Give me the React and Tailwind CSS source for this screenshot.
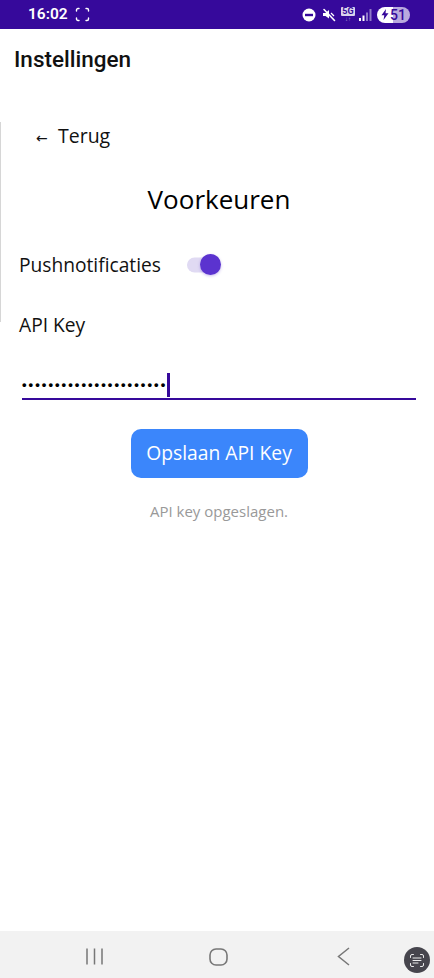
import { useState } from 'react';

function StatusBar() {
  return (
    <div className="h-[29px] shrink-0 bg-[#36099b] flex items-center justify-between pl-[28px] pr-[24px] text-white">
      <div className="flex items-center gap-[7px]">
        <span className="font-['Roboto',sans-serif] font-semibold text-[15.5px] leading-none">16:02</span>
        <svg width="15" height="15" viewBox="0 0 15 15" fill="none" stroke="#fff" strokeWidth="1.4" strokeLinecap="round">
          <path d="M1.5 4V3A1.5 1.5 0 0 1 3 1.500h1M11 1.500h1A1.500 1.500 0 0 1 13.500 3v1M13.500 11v1a1.500 1.500 0 0 1-1.500 1.500h-1M4 13.500H3A1.500 1.500 0 0 1 1.500 12v-1" />
        </svg>
      </div>
      <div className="flex items-center">
        <svg width="14" height="14" viewBox="0 0 14 14" className="mr-[5px]">
          <circle cx="7" cy="7" r="6.500" fill="#fff" />
          <rect x="3" y="5.800" width="8" height="2.400" fill="#36099b" />
        </svg>
        <svg width="16" height="16" viewBox="0 0 16 16" className="mr-[4px]">
          <path d="M2 6h2.500L8 3v8.500L4.500 9H2z" fill="#fff" />
          <path d="M3 2.500l10.500 11" stroke="#fff" strokeWidth="1.600" strokeLinecap="round" />
          <path d="M10 6l3 3" stroke="#fff" strokeWidth="1.200" />
        </svg>
        <div className="w-[14px] h-[15px] mr-[4px] flex flex-col items-center overflow-hidden">
          <span className="font-['Roboto',sans-serif] font-bold text-[9px] leading-[9px] bg-[#d9d2ec] text-[#36099b] rounded-[1px] px-[1.5px]">5G</span>
          <span className="text-[6px] leading-[6px] text-[#a893d6]">↓↑</span>
        </div>
        <svg width="13" height="13" viewBox="0 0 13 13" className="mr-[5px]">
          <rect x="0" y="10" width="2" height="3" fill="#fff" />
          <rect x="3.500" y="7.500" width="2" height="5.500" fill="#fff" />
          <rect x="7" y="4.500" width="2" height="8.500" fill="#8f78c8" />
          <rect x="10.500" y="1" width="2" height="12" fill="#8f78c8" />
        </svg>
        <div className="w-[33px] h-[16px] rounded-full bg-[linear-gradient(90deg,#ffffff_0_50%,#b9a9de_50%_100%)] flex items-center justify-center gap-[1px] text-[#36099b]">
          <svg width="8" height="11" viewBox="0 0 8 11">
            <path d="M5 0L0.500 6.200h2.800L2.500 11 7.500 4.300H4.500z" fill="#36099b" />
          </svg>
          <span className="font-['Roboto',sans-serif] font-medium text-[14px] leading-none">51</span>
        </div>
      </div>
    </div>
  );
}

function Toggle() {
  const [on, setOn] = useState(true);
  return (
    <button
      onClick={() => setOn(!on)}
      className={`relative w-[34px] h-[22px] -mt-[1px] flex items-center ${on ? 'justify-end' : 'justify-start'}`}
    >
      <span className="absolute left-0 right-[4px] top-1/2 -translate-y-1/2 h-[15px] rounded-full bg-[#e0daf3]" />
      <span className="relative w-[21px] h-[21px] rounded-full bg-[#5b33cf] shadow-[0_1px_3px_rgba(91,51,207,0.35)]" />
    </button>
  );
}

function NavBar() {
  return (
    <div className="relative h-[47px] shrink-0 bg-[#f2f2f2] flex items-center justify-between pl-[86px] pr-[84px] pt-[4px]">
      <svg width="17" height="17" viewBox="0 0 17 17" fill="none" stroke="#777" strokeWidth="1.500">
        <path d="M1 0.500v16M8.500 0.500v16M16 0.500v16" />
      </svg>
      <svg width="19" height="18" viewBox="0 0 19 18" fill="none" stroke="#777" strokeWidth="1.600" className="mr-[3px]">
        <rect x="1" y="1" width="17" height="16" rx="6" />
      </svg>
      <svg width="13" height="19" viewBox="0 0 13 19" fill="none" stroke="#777" strokeWidth="1.500">
        <path d="M12 1L1.500 9.500 12 18" />
      </svg>
      <div className="absolute right-[4px] top-[16px] w-[26px] h-[26px] rounded-full bg-[#46454d] flex items-center justify-center">
        <svg width="14" height="13" viewBox="0 0 14 13" fill="none" stroke="#fff" strokeWidth="0.900" strokeLinecap="round">
          <path d="M0.500 3.500V2A1.500 1.500 0 0 1 2 0.500h1.500M10.500 0.500H12A1.500 1.500 0 0 1 13.500 2v1.500M13.500 9.500V11a1.500 1.500 0 0 1-1.500 1.500h-1.500M3.500 12.500H2A1.500 1.500 0 0 1 0.500 11V9.500" />
          <path d="M3 4h8M3 6.500h8M3 9h5" />
        </svg>
      </div>
    </div>
  );
}

export default function App() {
  return (
    <div className="relative w-[434px] h-[978px] bg-white flex flex-col font-['Open_Sans',sans-serif] overflow-hidden">
      <StatusBar />

      {/* Kop */}
      <div className="h-[62px] shrink-0 flex items-center pl-[14px]">
        <h1 className="font-['Roboto',sans-serif] font-medium text-[22.5px] text-[#111]">Instellingen</h1>
      </div>

      {/* Randje van de zijlade */}
      <div className="absolute left-0 top-[122px] w-px h-[200px] bg-[#d6d6d6]" />

      <div className="flex-1 pl-[19px] pr-[15px]">
        <div className="mt-[31px] ml-[17px] h-[28px] flex items-center text-[#111]">
          <span className="text-[14px] w-[22px] mt-[4px] font-['DejaVu_Sans',sans-serif]">←</span>
          <span className="text-[19.5px]">Terug</span>
        </div>

        <h2 className="mt-[31px] text-center text-[26px] leading-[36px] text-black font-medium">Voorkeuren</h2>

        <div className="mt-[36px] h-[24px] flex items-center">
          <span className="text-[19.2px] text-[#111] mr-[26px]">Pushnotificaties</span>
          <Toggle />
        </div>

        <div className="mt-[36px] h-[24px] flex items-center text-[19.2px] text-[#111]">API Key</div>

        <div className="mt-[34px] ml-[3px] mr-[3px] h-[29px] border-b-2 border-[#36099b] flex items-center">
          <span className="text-[13px] font-bold tracking-[2.05px] text-black leading-none font-['Liberation_Sans',sans-serif]">••••••••••••••••••••••</span>
          <span className="w-[3px] h-[24px] bg-[#36099b]" />
        </div>

        <div className="mt-[29px] flex justify-center">
          <button className="w-[177px] h-[49px] rounded-[10px] bg-[#3b86fb] text-white text-[19.3px]">Opslaan API Key</button>
        </div>

        <p className="mt-[23px] text-center text-[15px] leading-[20px] text-[#999]">API key opgeslagen.</p>
      </div>

      <NavBar />
    </div>
  );
}
